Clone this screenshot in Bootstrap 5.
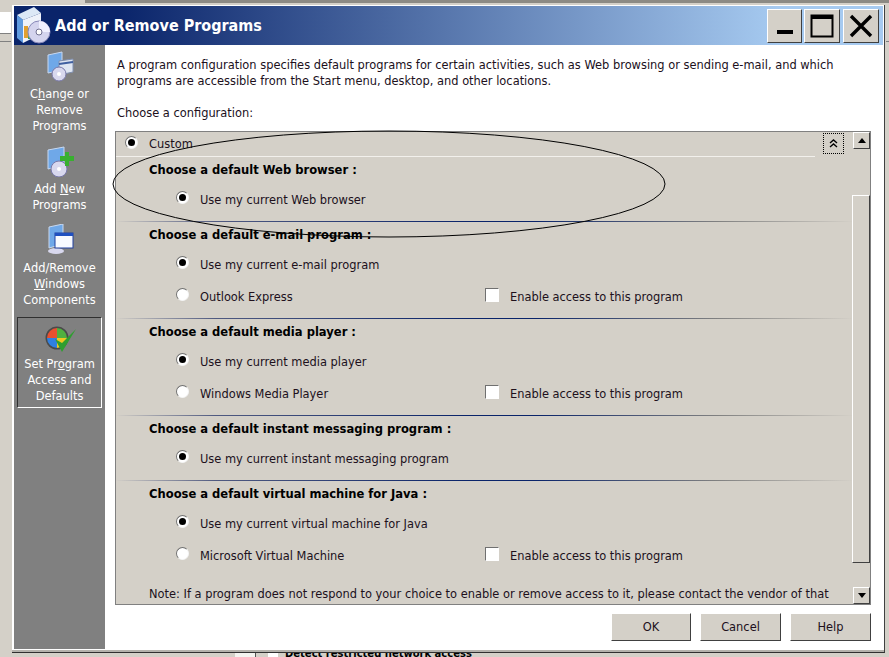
<!DOCTYPE html>
<html lang="en">
<head>
<meta charset="UTF-8">
<title>Add or Remove Programs</title>
<link href="https://cdn.jsdelivr.net/npm/bootstrap@5.3.0/dist/css/bootstrap.min.css" rel="stylesheet">
<style>
    html, body { height: 100%; }
    body { background: #d4d0c8; overflow: hidden; font-family: "DejaVu Sans", sans-serif; font-size: 11.43px; line-height: 16px; color: #20101c; }
    .app-window { position: relative; width: 873px; height: 648px; margin: 5px 0 0 12px; padding: 1px 1px 3px 2px; background: #fff; border-right: 1px solid #404040; border-bottom: 1px solid #303030; box-shadow: inset 0 -2px 0 #b4b2ac; }
    .title-bar { height: 39px; background: linear-gradient(90deg, #0a246a 0%, #0a246a 12%, #a6caf0 88%); padding-right: 4px; }
    .title-text { font-size: 16px; font-weight: 700; color: #fff; margin-left: 3px; margin-top: 1px; font-family: "DejaVu Sans Condensed", "DejaVu Sans", sans-serif; }
    .win-btn { width: 36px; height: 34px; background: #d4d0c8; border: 1px solid; border-color: #fff #404040 #404040 #fff; padding: 0; }
    .win-btn-min { width: 35px; margin-right: 2px; }
    .win-btn-max { margin-right: 3px; }
    .side-bar { width: 91px; background: #808080; color: #fff; text-align: center; flex-shrink: 0; padding-top: 5px; }
    .side-item { display: block; padding: 0 2px 11px; }
    .side-label { display: block; margin-top: 4px; }
    .side-item.active-item { margin: -2px 3px 0 3px; padding: 3px 0 3px; border: 1px solid; border-color: #303030 #fff #fff #303030; }
    .active-item .side-label { margin-top: 3px; }
    .main-area { padding: 12px 13px 0 10px; }
    .intro-line { margin-left: 2px; }
    .config-panel { width: 756px; height: 474px; margin-top: 10px; background: #d4d0c8; border: 1px solid #808080; overflow: hidden; position: relative; }
    .panel-body { width: 737px; }
    .custom-row { height: 25px; padding: 0 0 0 9px; border-bottom: 1px solid #f2f0ec; margin-right: 38px; }
    .custom-label { margin-left: 11px; }
    .group-box { padding: 0 0 6px 33px; }
    .group-box + .group-box { border-top: 1px solid; border-image: linear-gradient(90deg, #d4d0c8 0, #505a80 100px, #0a246a 350px, #0a246a 420px, #808080 600px, #d4d0c8 100%) 1; }
    .group-head { height: 26px; padding-top: 5px; font-size: 11.55px; font-weight: 700; color: #000; }
    .opt-row { height: 32px; padding-left: 27px; }
    .opt-label { width: 285px; margin-left: 11px; padding-top: 2px; }
    .opt-extra { padding-top: 2px; }
    .radio-dot { width: 13px; height: 13px; border-radius: 50%; background: #fff; border: 1px solid; border-color: #707070 #f4f4f4 #f4f4f4 #707070; flex-shrink: 0; display: flex; align-items: center; justify-content: center; margin-top: -3px; }
    .radio-dot.is-on::after { content: ""; width: 7px; height: 7px; background: #000; border-radius: 50%; }
    .check-square { width: 14px; height: 14px; background: #fff; border: 1px solid; border-color: #707070 #fff #fff #707070; margin-right: 11px; margin-top: -2px; }
    .collapse-btn { position: absolute; top: 1px; right: 26px; width: 21px; height: 21px; border: 1px dotted #000; display: flex; align-items: center; justify-content: center; }
    .scroll-track { position: absolute; right: 0; top: 0; bottom: 0; width: 18px; }
    .scroll-btn { position: absolute; right: 0; width: 17px; height: 17px; background: #d4d0c8; border: 1px solid; border-color: #fff #404040 #404040 #fff; display: flex; align-items: center; justify-content: center; }
    .scroll-up { top: 0; }
    .scroll-down { bottom: 0; }
    .scroll-thumb { position: absolute; right: 0; top: 63px; width: 18px; height: 368px; border: 1px solid; border-color: #fff #404040 #404040 #fff; }
    .note-line { white-space: nowrap; padding-top: 9px; margin-left: 33px; }
    .dialog-actions { gap: 9px; margin-top: 8px; }
    .dlg-btn { height: 28px; padding: 0; border-radius: 0; background: #d4d0c8; color: #20101c; font-size: 11.43px; border: 1px solid; border-color: #fff #404040 #404040 #fff; }
    .dlg-ok { width: 80px; }
    .dlg-wide { width: 81px; }
    .oval-mark { position: absolute; left: 110px; top: 129px; pointer-events: none; }
    .bottom-scrap { position: absolute; left: 285px; top: 649px; font-size: 10px; font-weight: 700; color: #000; line-height: 10px; white-space: nowrap; }
    .scrap-box { position: absolute; left: 235px; top: 650px; width: 21px; height: 7px; background: #f4f4f0; border-right: 1px solid #555; }
    .scrap-check { position: absolute; left: 268px; top: 650px; width: 10px; height: 7px; background: #fff; }
    .scrap-top { position: absolute; left: 85px; right: 0; top: 0; height: 3px; background: #8c8a84; }
    .scrap-left { position: absolute; left: 0; top: 12px; width: 11px; height: 22px; background: #fff; border-bottom: 1px solid #808080; }
    .scrap-left-line { position: absolute; left: 0; top: 41px; width: 11px; height: 1px; background: #808080; }
    .scrap-right-line { position: absolute; right: 0; top: 41px; width: 3px; height: 1px; background: #808080; }
</style>
</head>
<body>
<div class="scrap-top"></div>
<div class="scrap-left"></div>
<div class="scrap-left-line"></div>
<div class="scrap-right-line"></div>
<div class="scrap-box"></div>
<div class="scrap-check"></div>
<div class="bottom-scrap">Detect restricted network access</div>
<div class="app-window d-flex flex-column">
    <div class="title-bar d-flex align-items-center">
        <svg width="38" height="39" viewBox="0 0 38 39">
            <path d="M3 9 L20 1 L27 7 L9 14Z" fill="#dce8f6"/>
            <path d="M3 9 L9 14 L9 37 L3 32Z" fill="#5f9be0"/>
            <path d="M9 14 L27 7 L27 28 L9 37Z" fill="#eef2fa"/>
            <rect x="10" y="20" width="4" height="12" fill="#e0a030"/>
            <rect x="14" y="22" width="4" height="11" fill="#40a050"/>
            <circle cx="25" cy="26" r="11" fill="#d4d4ee" stroke="#8888b8"/>
            <path d="M25 15 A11 11 0 0 1 36 26 H28 A3 3 0 0 0 25 23Z" fill="#f0f0ff"/>
            <circle cx="25" cy="26" r="3" fill="#fff" stroke="#707090"/>
        </svg>
        <span class="title-text">Add or Remove Programs</span>
        <div class="ms-auto d-flex">
            <button class="win-btn win-btn-min d-flex align-items-end justify-content-center pb-2" aria-label="Minimize"><svg width="16" height="4"><rect width="16" height="4" fill="#000"/></svg></button>
            <button class="win-btn win-btn-max d-flex align-items-center justify-content-center" aria-label="Maximize"><svg width="24" height="24"><rect x="1.5" y="1.5" width="21" height="21" fill="none" stroke="#000" stroke-width="2"/><rect x="1" y="1" width="22" height="4" fill="#000"/></svg></button>
            <button class="win-btn d-flex align-items-center justify-content-center" aria-label="Close"><svg width="24" height="24"><path d="M2 2 L22 22 M22 2 L2 22" stroke="#000" stroke-width="3.4"/></svg></button>
        </div>
    </div>
    <div class="d-flex flex-grow-1">
        <div class="side-bar">
            <a class="side-item text-white text-decoration-none">
                <svg width="32" height="32" viewBox="0 0 32 32" class="d-block mx-auto"><path d="M4 5 L18 2 V20 L4 23Z" fill="#6fa8e8" stroke="#c8d8f0"/><path d="M15 11 L29 9 V22 L15 25Z" fill="#dfe6f2" stroke="#8090b0"/><path d="M15 14 L29 12" stroke="#4060a0" stroke-width="2"/><circle cx="15" cy="24" r="7" fill="#d8d8ee" stroke="#7878a8"/><circle cx="15" cy="24" r="2" fill="#fff"/></svg>
                <span class="side-label">C<u>h</u>ange or<br>Remove<br>Programs</span>
            </a>
            <a class="side-item text-white text-decoration-none">
                <svg width="32" height="32" viewBox="0 -2 32 32" class="d-block mx-auto"><path d="M4 3 L20 0 V18 L4 22Z" fill="#6fa8e8" stroke="#c8d8f0"/><circle cx="15" cy="22" r="8" fill="#d8d8ee" stroke="#7878a8"/><circle cx="15" cy="22" r="2" fill="#fff"/><path d="M21 5 h4 v4 h5 v5 h-5 v5 h-4 v-5 h-5 v-5 h5z" fill="#38b030"/></svg>
                <span class="side-label">Add <u>N</u>ew<br>Programs</span>
            </a>
            <a class="side-item text-white text-decoration-none">
                <svg width="32" height="32" viewBox="0 0 32 32" class="d-block mx-auto"><path d="M5 3 L19 0 V20 L5 24Z" fill="#6fa8e8" stroke="#c8d8f0"/><ellipse cx="12" cy="27" rx="8" ry="3" fill="#d8d8ee"/><rect x="11" y="9" width="18" height="15" fill="#f8faff" stroke="#2040a0"/><rect x="11" y="9" width="18" height="3" fill="#2050c0"/></svg>
                <span class="side-label">Add/Remove<br><u>W</u>indows<br>Components</span>
            </a>
            <a class="side-item active-item text-white text-decoration-none">
                <svg width="32" height="32" viewBox="0 -4 32 32" class="d-block mx-auto"><circle cx="13" cy="13" r="11.5" fill="#4a4a4a"/><path d="M13 3 A10 10 0 0 0 3 13 H13Z" fill="#e85030"/><path d="M13 3 A10 10 0 0 1 23 13 H13Z" fill="#50b040"/><path d="M3 13 A10 10 0 0 0 13 23 V13Z" fill="#3080e0"/><path d="M23 13 A10 10 0 0 1 13 23 V13Z" fill="#f0c820"/><path d="M11 14 L18 27 L32 4 L18 18Z" fill="#2f9e30"/></svg>
                <span class="side-label">Set Pr<u>o</u>gram<br>Access and<br>Defaults</span>
            </a>
        </div>
        <div class="main-area flex-grow-1">
            <div class="intro-line">A program configuration specifies default programs for certain activities, such as Web browsing or sending e-mail, and which<br>programs are accessible from the Start menu, desktop, and other locations.</div>
            <div class="intro-line mt-3">Choose a configuration:</div>
            <div class="config-panel">
                <div class="panel-body">
                    <div class="custom-row d-flex align-items-center"><span class="radio-dot is-on"></span><span class="custom-label">Custom</span></div>
                    <div class="group-box">
                        <div class="group-head">Choose a default Web browser :</div>
                        <div class="opt-row d-flex align-items-center"><span class="radio-dot is-on"></span><span class="opt-label">Use my current Web browser</span></div>
                    </div>
                    <div class="group-box">
                        <div class="group-head">Choose a default e-mail program :</div>
                        <div class="opt-row d-flex align-items-center"><span class="radio-dot is-on"></span><span class="opt-label">Use my current e-mail program</span></div>
                        <div class="opt-row d-flex align-items-center"><span class="radio-dot"></span><span class="opt-label">Outlook Express</span><span class="check-square"></span><span class="opt-extra">Enable access to this program</span></div>
                    </div>
                    <div class="group-box">
                        <div class="group-head">Choose a default media player :</div>
                        <div class="opt-row d-flex align-items-center"><span class="radio-dot is-on"></span><span class="opt-label">Use my current media player</span></div>
                        <div class="opt-row d-flex align-items-center"><span class="radio-dot"></span><span class="opt-label">Windows Media Player</span><span class="check-square"></span><span class="opt-extra">Enable access to this program</span></div>
                    </div>
                    <div class="group-box">
                        <div class="group-head">Choose a default instant messaging program :</div>
                        <div class="opt-row d-flex align-items-center"><span class="radio-dot is-on"></span><span class="opt-label">Use my current instant messaging program</span></div>
                    </div>
                    <div class="group-box">
                        <div class="group-head">Choose a default virtual machine for Java :</div>
                        <div class="opt-row d-flex align-items-center"><span class="radio-dot is-on"></span><span class="opt-label">Use my current virtual machine for Java</span></div>
                        <div class="opt-row d-flex align-items-center"><span class="radio-dot"></span><span class="opt-label">Microsoft Virtual Machine</span><span class="check-square"></span><span class="opt-extra">Enable access to this program</span></div>
                    </div>
                    <div class="note-line">Note: If a program does not respond to your choice to enable or remove access to it, please contact the vendor of that</div>
                </div>
                <div class="collapse-btn"><svg width="9" height="9" viewBox="0 0 9 9"><path d="M1 4 L4.5 1 L8 4 M1 8 L4.5 5 L8 8" fill="none" stroke="#000" stroke-width="1.4"/></svg></div>
                <div class="scroll-track">
                    <div class="scroll-btn scroll-up"><svg width="8" height="5"><path d="M0 5 L4 0 L8 5Z"/></svg></div>
                    <div class="scroll-thumb"></div>
                    <div class="scroll-btn scroll-down"><svg width="8" height="5"><path d="M0 0 L4 5 L8 0Z"/></svg></div>
                </div>
            </div>
            <div class="dialog-actions d-flex justify-content-end">
                <button class="dlg-btn dlg-ok">OK</button>
                <button class="dlg-btn dlg-wide">Cancel</button>
                <button class="dlg-btn dlg-wide">Help</button>
            </div>
        </div>
    </div>
</div>
<svg class="oval-mark" width="560" height="112" viewBox="0 0 560 112"><ellipse cx="279" cy="55" rx="276" ry="53" fill="none" stroke="#000" stroke-width="1"/></svg>
</body>
</html>
